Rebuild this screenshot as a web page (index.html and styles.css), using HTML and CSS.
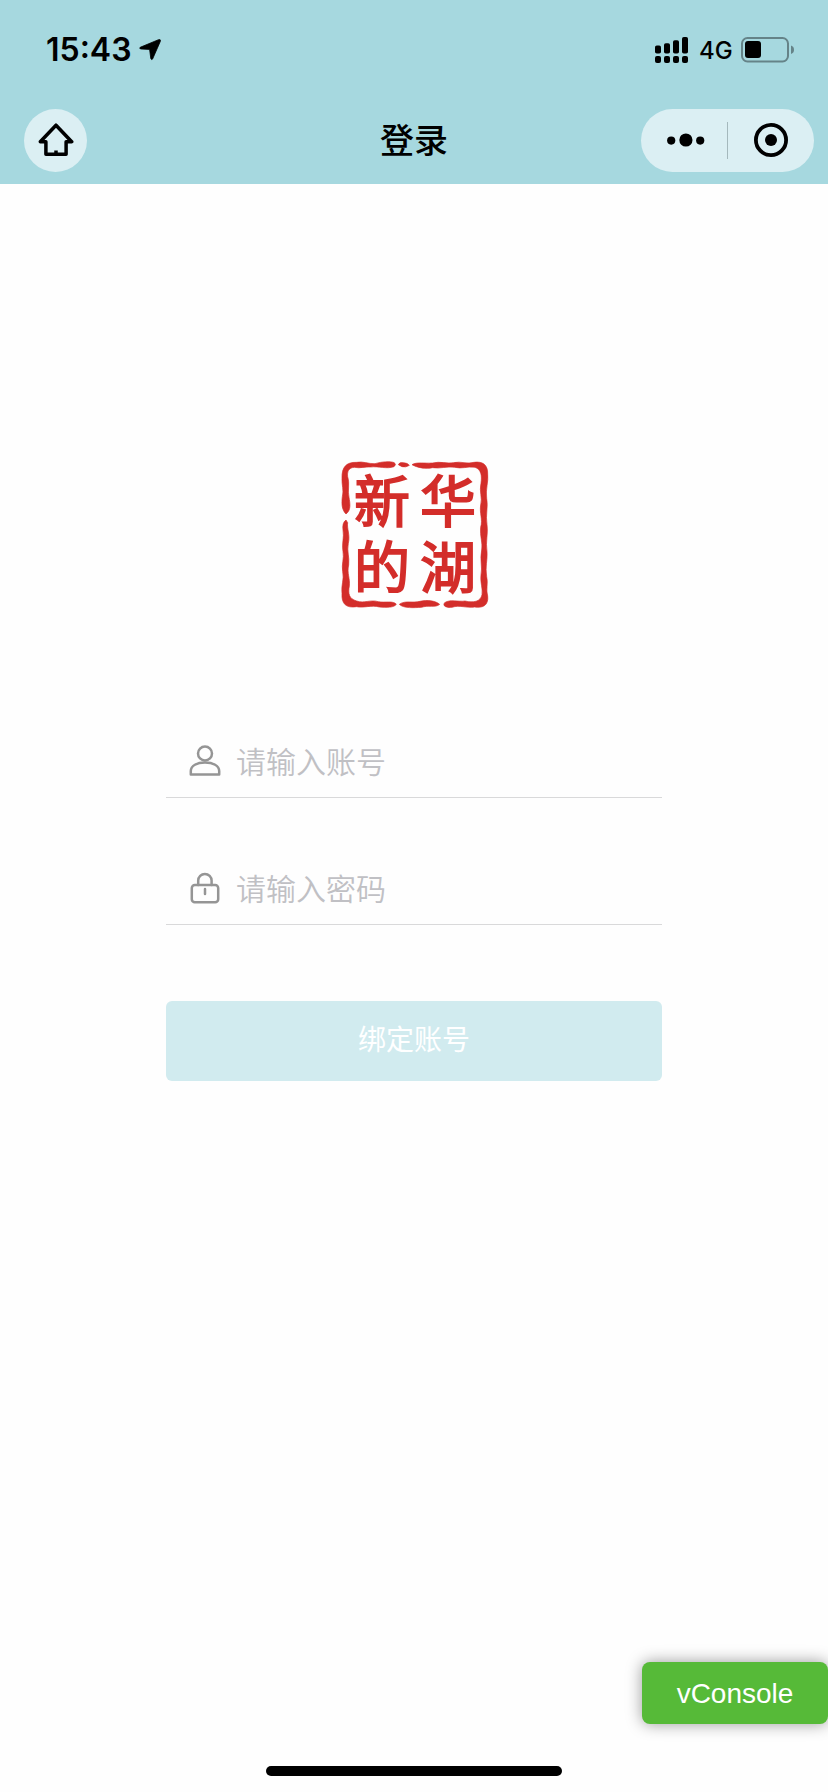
FILE: index.html
```html
<!DOCTYPE html>
<html lang="zh-CN">
<head>
<meta charset="utf-8">
<title>登录</title>
<link rel="stylesheet" href="styles.css">
</head>
<body>
<header class="top">
  <div class="status">
    <div class="status-left">
      <span class="time">15:43</span>
      <svg class="location" width="22" height="22" viewBox="0 0 22 22"><path d="M21.2.8Q20.6.2 19.5.7L1.2 8.3Q0 9.2 1.4 9.9L10.6 10.4 11.8 19.6Q12.5 21.4 13.6 20L21.3 2.4Q21.8 1.4 21.2.8Z" stroke="#000" stroke-width=".8"/></svg>
    </div>
    <div class="status-right">
      <svg class="signal" width="34" height="28" viewBox="0 0 34 28"><rect x="0" y="8.5" width="6" height="8" rx="1.8"/><rect x="9" y="6.3" width="6" height="10.2" rx="1.8"/><rect x="18" y="3.3" width="6" height="13.2" rx="1.8"/><rect x="27" y="0" width="6" height="16.5" rx="1.8"/><rect x="0" y="19" width="6" height="7" rx="2"/><rect x="9" y="19" width="6" height="7" rx="2"/><rect x="18" y="19" width="6" height="7" rx="2"/><rect x="27" y="19" width="6" height="7" rx="2"/></svg>
      <span class="network">4G</span>
      <svg class="battery" width="54" height="26" viewBox="0 0 54 26"><rect x="1" y="1" width="46" height="23.5" rx="5.5" fill="none" stroke="#658388" stroke-width="2"/><rect x="4" y="4" width="16" height="17" rx="3"/><path d="M50 8.5Q53 9.5 53 12.8T50 17Z" fill="#658388"/></svg>
    </div>
  </div>
  <nav class="nav">
    <a class="home" aria-label="首页">
      <svg width="36" height="34" viewBox="0 0 36 34"><path d="M7.9 18.8H2.3L18 2.2 33.7 18.8H28.1V31.3H7.9ZM18 27.5V31" fill="none" stroke="#000" stroke-width="3.5" stroke-linejoin="round"/></svg>
    </a>
    <h1 class="title">登录</h1>
    <div class="capsule">
      <svg class="more" width="38" height="14" viewBox="0 0 38 14"><circle cx="4.2" cy="7.6" r="4.1"/><circle cx="18.9" cy="7" r="6.6"/><circle cx="33.2" cy="7.6" r="4.1"/></svg>
      <span class="divider"></span>
      <svg class="close" width="34" height="34" viewBox="0 0 34 34"><circle cx="17" cy="17" r="15.1" fill="none" stroke="#000" stroke-width="3.8"/><circle cx="17" cy="17" r="6"/></svg>
    </div>
  </nav>
</header>
<main class="content">
  <div class="seal">
    <svg class="seal-frame" width="170" height="170" viewBox="0 0 510 510">
      <path d="M48 192C34 178 35 158 37 140 42 120 35 105 36 85 35 52 48 36 80 37 98 33 115 42 135 41 155 35 180 33 193 38Q200 44 192 50C170 58 145 48 122 51 105 49 92 56 73 52 56 53 51 65 53 80 60 100 52 122 57 142 60 160 64 180 48 192Z"/>
      <path d="M205 44Q207 36 220 38 234 39 238 46 228 53 216 50Z"/>
      <path d="M246 44C260 35 285 41 308 39 330 33 350 42 370 38 393 33 412 43 432 37 458 33 474 45 473 72 476 95 466 118 470 145 475 170 466 195 471 224 475 250 466 275 471 305 473 330 465 350 470 380 475 400 467 418 473 438 476 465 460 475 434 471 410 475 388 464 366 472 350 474 336 468 344 458 360 447 385 456 405 453 430 459 452 455 456 434 459 415 450 398 453 375 458 350 449 330 455 300 459 280 449 257 452 232 459 208 448 190 452 165 458 143 447 125 453 100 456 78 454 58 435 52 412 49 395 57 374 52 350 48 330 57 308 53 287 58 262 53 246 44Z"/>
      <path d="M48 210Q36 218 39 240C43 262 35 280 39 305 43 325 34 342 38 365 43 388 33 405 36 430 34 462 48 475 80 470 100 475 125 464 148 471 170 473 192 473 199 463 190 451 165 459 145 455 120 448 103 461 80 453 56 446 54 430 58 408 61 386 50 370 56 345 59 320 50 305 55 280 61 255 50 235 53 218Z"/>
      <path d="M208 463C225 450 250 460 270 454 292 448 318 453 329 463 318 474 292 465 275 472 252 473 222 476 208 463Z"/>
    </svg>
    <div class="seal-text"><span>新</span><span>华</span><span>的</span><span>湖</span></div>
  </div>
  <form class="form">
    <label class="field">
      <svg width="32" height="32" viewBox="0 0 32 32"><circle cx="16" cy="8.5" r="7"/><path d="M1.8 29.5V26C1.8 20.5 8 17.6 16 17.6S30.2 20.5 30.2 26V29.5Z"/></svg>
      <input class="input" type="text" placeholder="请输入账号">
    </label>
    <label class="field">
      <svg width="32" height="32" viewBox="0 0 32 32"><rect x="2.8" y="13" width="26.4" height="17.2" rx="3"/><path d="M9.2 13V8.6A6.7 6.7 0 0 1 22.6 8.6V13M16 17V22"/></svg>
      <input class="input" type="password" placeholder="请输入密码">
    </label>
    <button class="submit" type="button">绑定账号</button>
  </form>
</main>
<div class="vconsole">vConsole</div>
<div class="home-indicator"></div>
</body>
</html>
```
FILE: styles.css
```css
* { box-sizing: border-box; }
body {
  margin: 0;
  width: 828px;
  height: 1792px;
  overflow: hidden;
  position: relative;
  background: #fefefe;
  color: #000;
  font-family: "Liberation Sans", "Noto Sans CJK SC", sans-serif;
}
svg { display: block; flex: none; }
.top { height: 184px; background: #a6d8df; }
.status {
  height: 100px;
  padding: 0 33px 0 46px;
  display: flex;
  align-items: center;
  justify-content: space-between;
  font-family: Inter, sans-serif;
}
.status-left, .status-right { display: flex; align-items: center; }
.time { font-size: 32px; font-weight: 600; line-height: 40px; width: 93px; white-space: nowrap; }
.network { font-size: 24px; font-weight: 500; line-height: 30px; width: 42px; margin-left: 10px; padding-top: 1px; }
.signal { margin-top: 2px; }
.nav {
  height: 80px;
  padding: 0 14px 0 24px;
  display: grid;
  grid-template-columns: 173px 1fr 173px;
  align-items: center;
}
.home {
  width: 63px;
  height: 63px;
  border-radius: 50%;
  background: #dbeff3;
  display: flex;
  align-items: center;
  justify-content: center;
}
.title {
  margin: 0 0 0 -10px;
  padding-top: 2px;
  font-size: 34px;
  font-weight: 500;
  line-height: 50px;
  text-align: center;
}
.capsule {
  height: 63px;
  border-radius: 32px;
  background: #dbeff3;
  display: grid;
  grid-template-columns: 86px 1px 86px;
  align-items: center;
  justify-items: center;
}
.more { margin-left: 4px; }
.divider { width: 1px; height: 37px; background: #a4b8bc; }
.content { display: flex; flex-direction: column; align-items: center; padding-top: 266px; }
.seal { width: 170px; height: 170px; margin-right: -2px; display: grid; }
.seal-frame, .seal-text { grid-area: 1 / 1; }
.seal-frame { fill: #d32d2a; stroke: #d32d2a; stroke-width: 2; stroke-linejoin: round; }
.seal-text {
  padding: 19px 0 0 24px;
  display: grid;
  grid-template-columns: 66px 66px;
  grid-template-rows: 66px 66px;
  font-family: "Noto Sans CJK SC", sans-serif;
  font-size: 56px;
  font-weight: 400;
  line-height: 58px;
  color: #d32d2a;
  -webkit-text-stroke: 1.8px #d32d2a;
  stroke-linejoin: round;
}
.seal-text span { width: 58px; height: 58px; }
.form { width: 496px; padding-top: 106px; display: flex; flex-direction: column; }
.field {
  height: 72px;
  margin-bottom: 55px;
  padding: 0 22px 2px 23px;
  border-bottom: 1px solid #d9d9da;
  display: flex;
  align-items: center;
  gap: 15px;
}
.field svg { fill: none; stroke: #959595; stroke-width: 2.5; stroke-linejoin: round; stroke-linecap: round; }
.input {
  flex: 1;
  min-width: 0;
  height: 50px;
  padding: 0 0 2px;
  border: 0;
  outline: 0;
  background: transparent;
  font: 350 30px "Noto Sans CJK SC", sans-serif;
}
.input::placeholder { color: #c0c0c4; opacity: 1; }
.submit {
  height: 80px;
  margin-top: 21px;
  padding: 0 0 6px;
  border: 0;
  border-radius: 6px;
  background: #d1ebef;
  color: #fff;
  font: 400 28px/40px "Noto Sans CJK SC", sans-serif;
}
.vconsole {
  position: absolute;
  right: 0;
  bottom: 68px;
  width: 186px;
  height: 62px;
  border-radius: 8px;
  background: #56ba38;
  box-shadow: 0 0 16px rgba(0, 0, 0, .4);
  color: #fff;
  font-size: 28px;
  line-height: 63px;
  text-align: center;
}
.home-indicator {
  position: absolute;
  left: 266px;
  bottom: 16px;
  width: 296px;
  height: 10px;
  border-radius: 5px;
  background: #000;
}
```
